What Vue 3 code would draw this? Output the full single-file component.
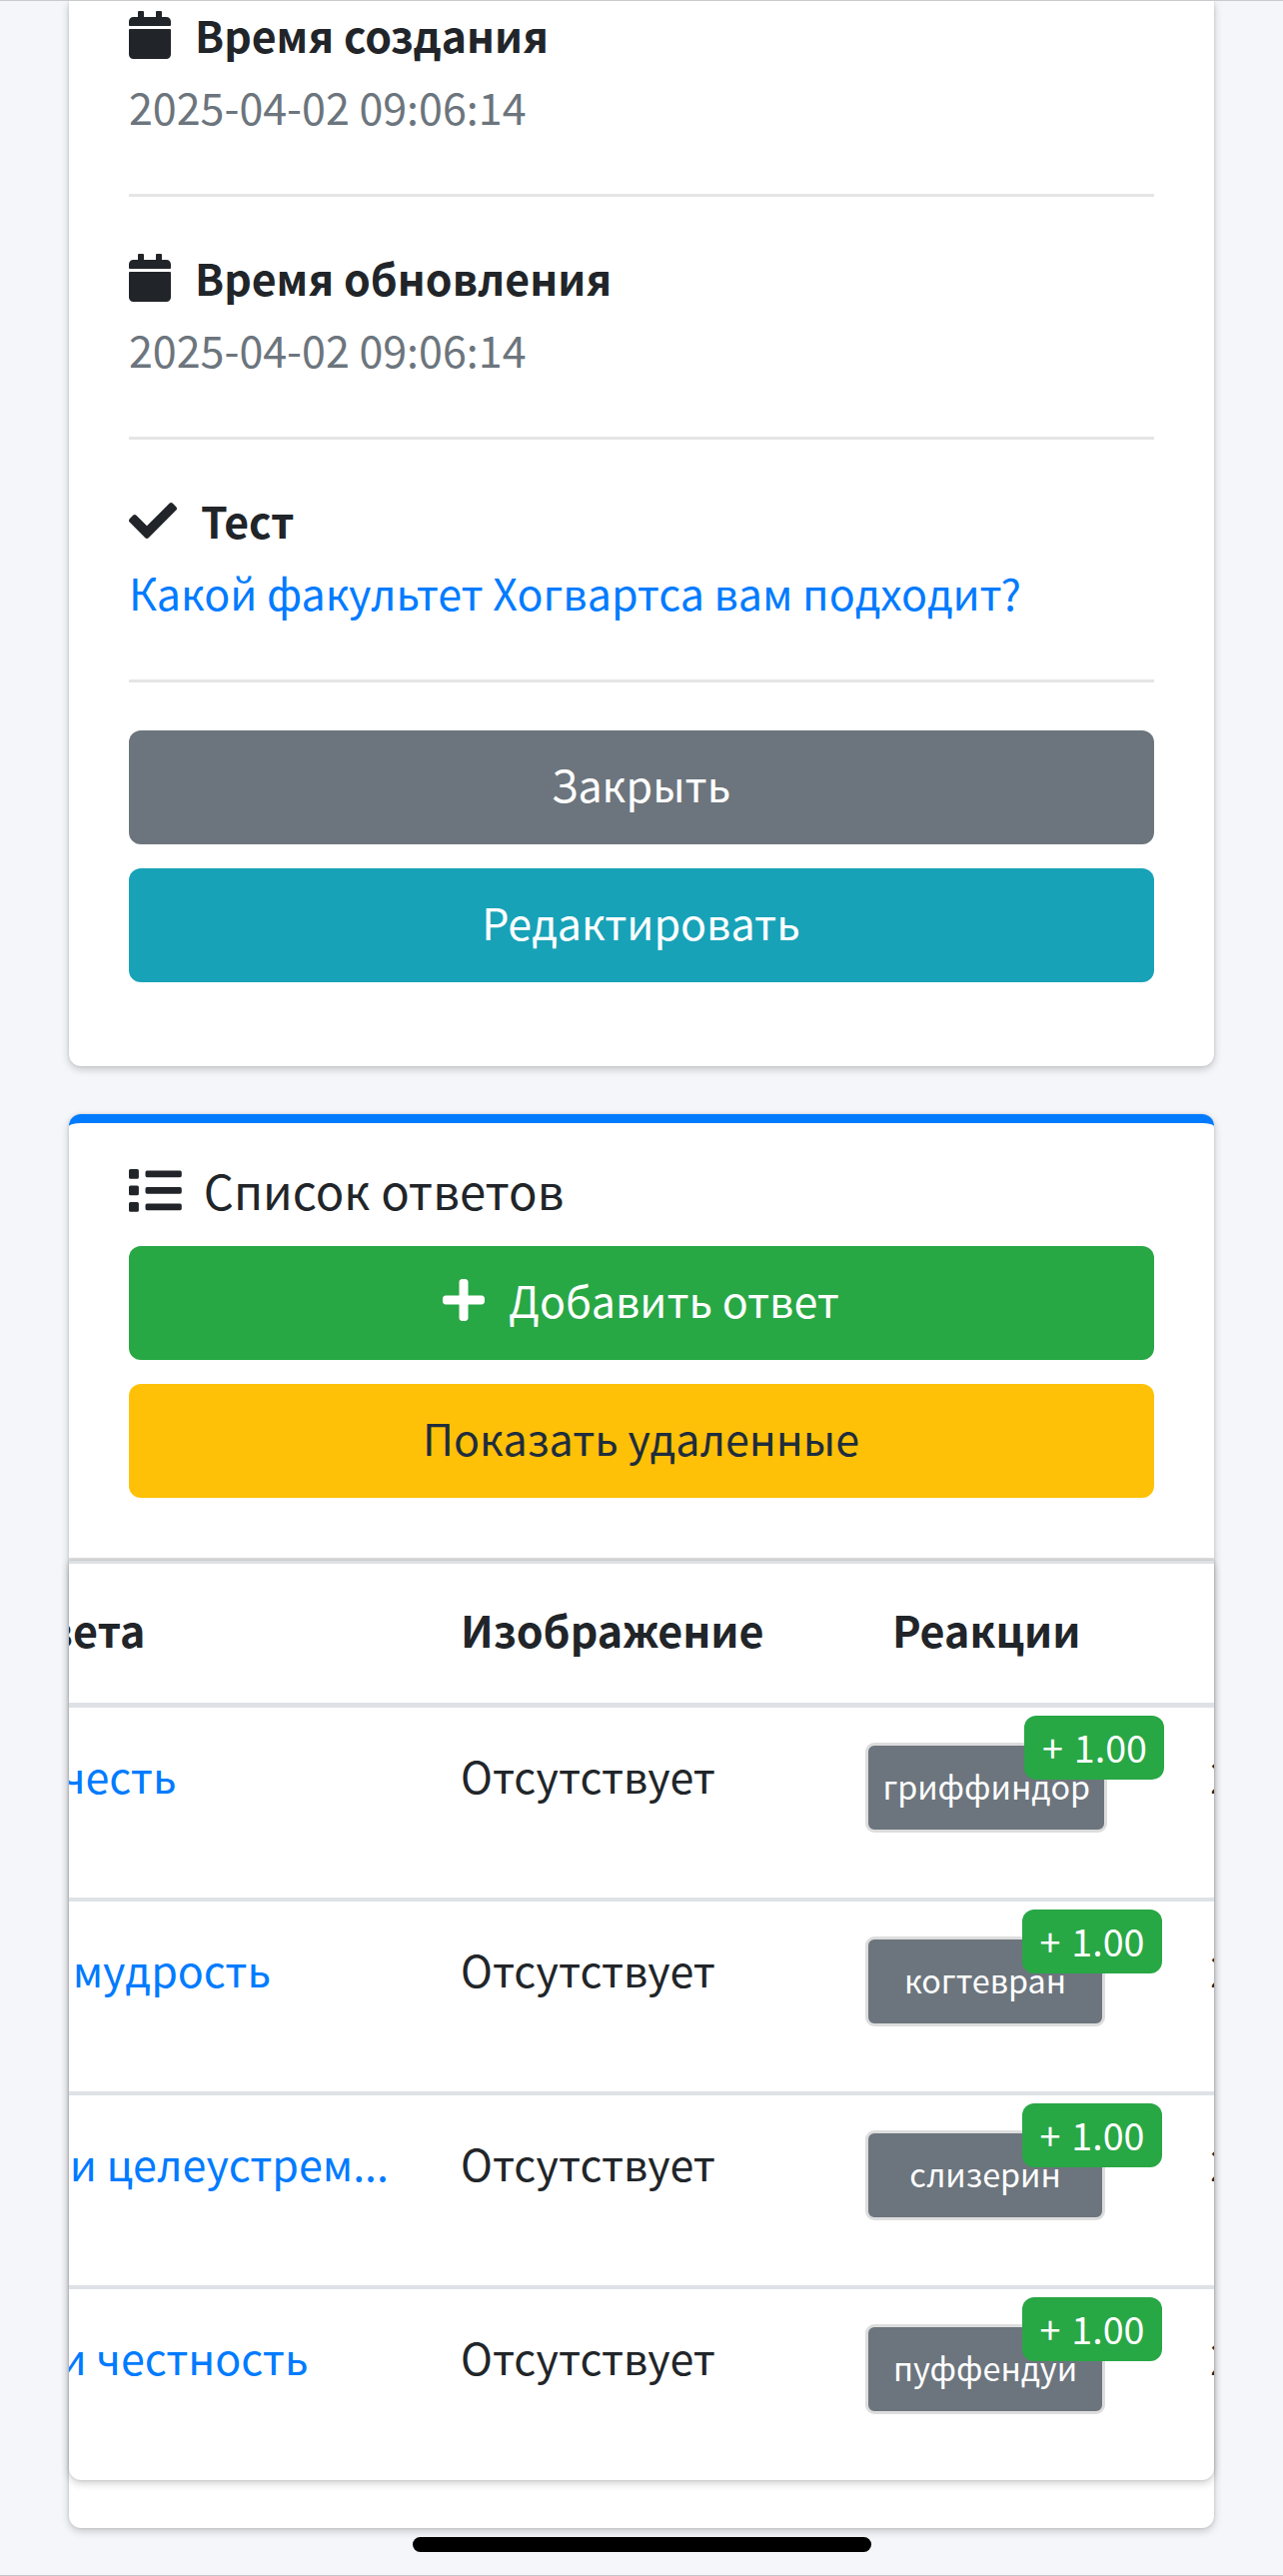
<script setup>
const icons = {
  calendar: {
    w: 448,
    d: 'M12 192h424c6.6 0 12 5.4 12 12v260c0 26.5-21.5 48-48 48H48c-26.5 0-48-21.5-48-48V204c0-6.6 5.4-12 12-12zm436-44v-36c0-26.5-21.5-48-48-48h-48V12c0-6.6-5.4-12-12-12h-40c-6.6 0-12 5.4-12 12v52H160V12c0-6.6-5.4-12-12-12h-40c-6.6 0-12 5.4-12 12v52H48C21.5 64 0 85.5 0 112v36c0 6.6 5.4 12 12 12h424c6.6 0 12-5.4 12-12z'
  },
  check: {
    w: 512,
    d: 'M173.898 439.404l-166.4-166.4c-9.997-9.997-9.997-26.206 0-36.204l36.203-36.204c9.997-9.998 26.207-9.998 36.204 0L192 312.69 432.095 72.596c9.997-9.997 26.207-9.997 36.204 0l36.203 36.204c9.997 9.997 9.997 26.206 0 36.204l-294.4 294.401c-9.998 9.997-26.207 9.997-36.204-.001z'
  }
}

const details = [
  { icon: icons.calendar, label: 'Время создания', value: '2025-04-02 09:06:14' },
  { icon: icons.calendar, label: 'Время обновления', value: '2025-04-02 09:06:14' },
  { icon: icons.check, label: 'Тест', value: 'Какой факультет Хогвартса вам подходит?', link: true }
]

// edge: how far the text reaches into view after the table is scrolled sideways
const header = { answer: 'вета', edge: 76.5 }
const answers = [
  { answer: 'честь', edge: 107.5, reaction: 'гриффиндор' },
  { answer: 'мудрость', edge: 202, reaction: 'когтевран' },
  { answer: 'и целеустрем...', edge: 320, reaction: 'слизерин' },
  { answer: 'и честность', edge: 239.5, reaction: 'пуффендуй' }
]
</script>

<template>
  <main class="page">
    <section class="card details">
      <div v-for="item in details" :key="item.label" class="detail">
        <div class="label">
          <svg class="icon" :viewBox="`0 0 ${item.icon.w} 512`" fill="currentColor"><path :d="item.icon.d" /></svg>
          <strong class="text">{{ item.label }}</strong>
        </div>
        <a v-if="item.link" class="text link">{{ item.value }}</a>
        <p v-else class="text muted">{{ item.value }}</p>
      </div>
      <div class="buttons">
        <button class="btn secondary"><span class="text">Закрыть</span></button>
        <button class="btn info"><span class="text">Редактировать</span></button>
      </div>
    </section>

    <section class="card outline">
      <header class="card-header">
        <h3 class="title">
          <svg class="icon-list" viewBox="0 0 512 512" fill="currentColor">
            <path d="M80 368H16a16 16 0 0 0-16 16v64a16 16 0 0 0 16 16h64a16 16 0 0 0 16-16v-64a16 16 0 0 0-16-16zm0-320H16A16 16 0 0 0 0 64v64a16 16 0 0 0 16 16h64a16 16 0 0 0 16-16V64a16 16 0 0 0-16-16zm0 160H16a16 16 0 0 0-16 16v64a16 16 0 0 0 16 16h64a16 16 0 0 0 16-16v-64a16 16 0 0 0-16-16zm416 176H176a16 16 0 0 0-16 16v32a16 16 0 0 0 16 16h320a16 16 0 0 0 16-16v-32a16 16 0 0 0-16-16zm0-320H176a16 16 0 0 0-16 16v32a16 16 0 0 0 16 16h320a16 16 0 0 0 16-16V80a16 16 0 0 0-16-16zm0 160H176a16 16 0 0 0-16 16v32a16 16 0 0 0 16 16h320a16 16 0 0 0 16-16v-32a16 16 0 0 0-16-16z" />
          </svg>
          <span>Список ответов</span>
        </h3>
        <div class="buttons">
          <button class="btn success">
            <svg class="icon" viewBox="0 0 448 512" fill="currentColor">
              <path d="M416 208H272V64c0-17.67-14.33-32-32-32h-32c-17.67 0-32 14.33-32 32v144H32c-17.67 0-32 14.33-32 32v32c0 17.67 14.33 32 32 32h144v144c0 17.67 14.33 32 32 32h32c17.67 0 32-14.33 32-32V304h144c17.67 0 32-14.33 32-32v-32c0-17.67-14.33-32-32-32z" />
            </svg>
            <span class="text">Добавить ответ</span>
          </button>
          <button class="btn warning"><span class="text">Показать удаленные</span></button>
        </div>
      </header>

      <div class="table">
        <div class="row head">
          <div class="cell answer"><span class="text" :style="{ width: header.edge + 'px' }">{{ header.answer }}</span></div>
          <div class="cell image"><span class="text">Изображение</span></div>
          <div class="cell reaction"><span class="text">Реакции</span></div>
          <div class="cell time"><span class="text">Время</span></div>
        </div>
        <div v-for="row in answers" :key="row.answer" class="row">
          <div class="cell answer"><a class="text link" :style="{ width: row.edge + 'px' }">{{ row.answer }}</a></div>
          <div class="cell image"><span class="text">Отсутствует</span></div>
          <div class="cell reaction">
            <div class="tag">{{ row.reaction }}<span class="badge">+ 1.00</span></div>
          </div>
          <div class="cell time"><span class="text">2025</span></div>
        </div>
      </div>
    </section>

    <div class="home-indicator"></div>
  </main>
</template>

<style>
body {
  background: #f4f6f9;
}
</style>

<style scoped>
* {
  box-sizing: border-box;
}

.page {
  position: relative;
  height: 2578px;
  padding: 0 69px;
  overflow: hidden;
  border-top: 1px solid #c8cacd;
  border-bottom: 1px solid #c3c5c8;
  background: #f4f6f9;
  color: #212529;
  font-family: "Noto Sans CJK SC", "Noto Sans", sans-serif;
  font-size: 43px;
}

.card {
  border-radius: 12px;
  background: #fff;
  box-shadow: 0 0 3px rgba(0, 0, 0, 0.125), 0 3px 9px rgba(0, 0, 0, 0.2);
}

.details {
  height: 1066px;
  padding: 1px 60px 84px;
  border-radius: 0 0 12px 12px;
}

.text {
  display: block;
  margin: 0;
  padding-bottom: 7px;
  line-height: 65px;
  white-space: nowrap;
}

strong.text {
  font-size: 42.8px;
}

.muted {
  color: #6c757d;
}

.link {
  color: #007bff;
}

.detail {
  padding-bottom: 48px;
  margin-bottom: 48px;
  border-bottom: 3px solid #e5e5e5;
}

.label {
  display: flex;
  gap: 24px;
}

.icon {
  flex: none;
  height: 48px;
  margin-top: 9px;
}

.buttons {
  display: flex;
  flex-direction: column;
  gap: 24px;
}

.btn {
  display: flex;
  justify-content: center;
  gap: 24px;
  height: 114px;
  padding: 21px 1px 21px 0;
  border: 0;
  border-radius: 12px;
  color: #fff;
  font: inherit;
}

.secondary {
  background: #6c757d;
}

.info {
  background: #17a2b8;
}

.success {
  background: #28a745;
}

.warning {
  background: #ffc107;
  color: #1f2d3d;
}

.outline {
  height: 1415px;
  margin-top: 48px;
  border-top: 9px solid #007bff;
}

.card-header {
  height: 438px;
  padding: 36px 60px 0;
  border-bottom: 3px solid #dfdfdf;
}

.title {
  display: flex;
  gap: 22px;
  height: 87px;
  margin: 0;
  font-size: 47.2px;
  font-weight: 400;
  line-height: 62px;
}

.icon-list {
  width: 52.8px;
  height: 52.8px;
  margin-top: 5px;
}

.table {
  overflow: hidden;
  border-radius: 0 0 12px 12px;
  border-top: 3px solid #dee2e6;
  background: #fff;
  box-shadow: 0 0 3px rgba(0, 0, 0, 0.125), 0 3px 9px rgba(0, 0, 0, 0.2);
}

.row {
  display: flex;
  width: 1400px;
  height: 194px;
  padding-top: 35px;
  border-bottom: 4px solid #dee2e6;
}

.row:last-child {
  height: 191px;
  border-bottom: 0;
}

.head {
  height: 144px;
  padding-top: 33px;
  border-bottom-width: 5px;
  font-weight: 700;
}

.cell {
  flex: none;
}

.answer {
  width: 392px;
}

.answer .text {
  display: flex;
  justify-content: flex-end;
}

.image {
  width: 405px;
}

.reaction {
  width: 345px;
}

.head .reaction {
  width: 346px;
  padding-left: 27px;
}

.tag {
  position: relative;
  width: fit-content;
  min-width: 240px;
  height: 90px;
  padding: 17px 14.4px 0;
  border: 3px solid #ddd;
  border-radius: 9px;
  background: #6c757d;
  color: #fff;
  font-size: 32.3px;
  line-height: 47px;
  text-align: center;
  white-space: nowrap;
}

.badge {
  position: absolute;
  top: -30px;
  right: -60px;
  width: 140px;
  height: 63.5px;
  border-radius: 12px;
  background: #28a745;
  font-size: 37.65px;
  line-height: 61px;
  word-spacing: 2.5px;
}

.home-indicator {
  position: absolute;
  left: 413px;
  bottom: 23px;
  width: 459px;
  height: 15px;
  border-radius: 8px;
  background: #000;
}
</style>
